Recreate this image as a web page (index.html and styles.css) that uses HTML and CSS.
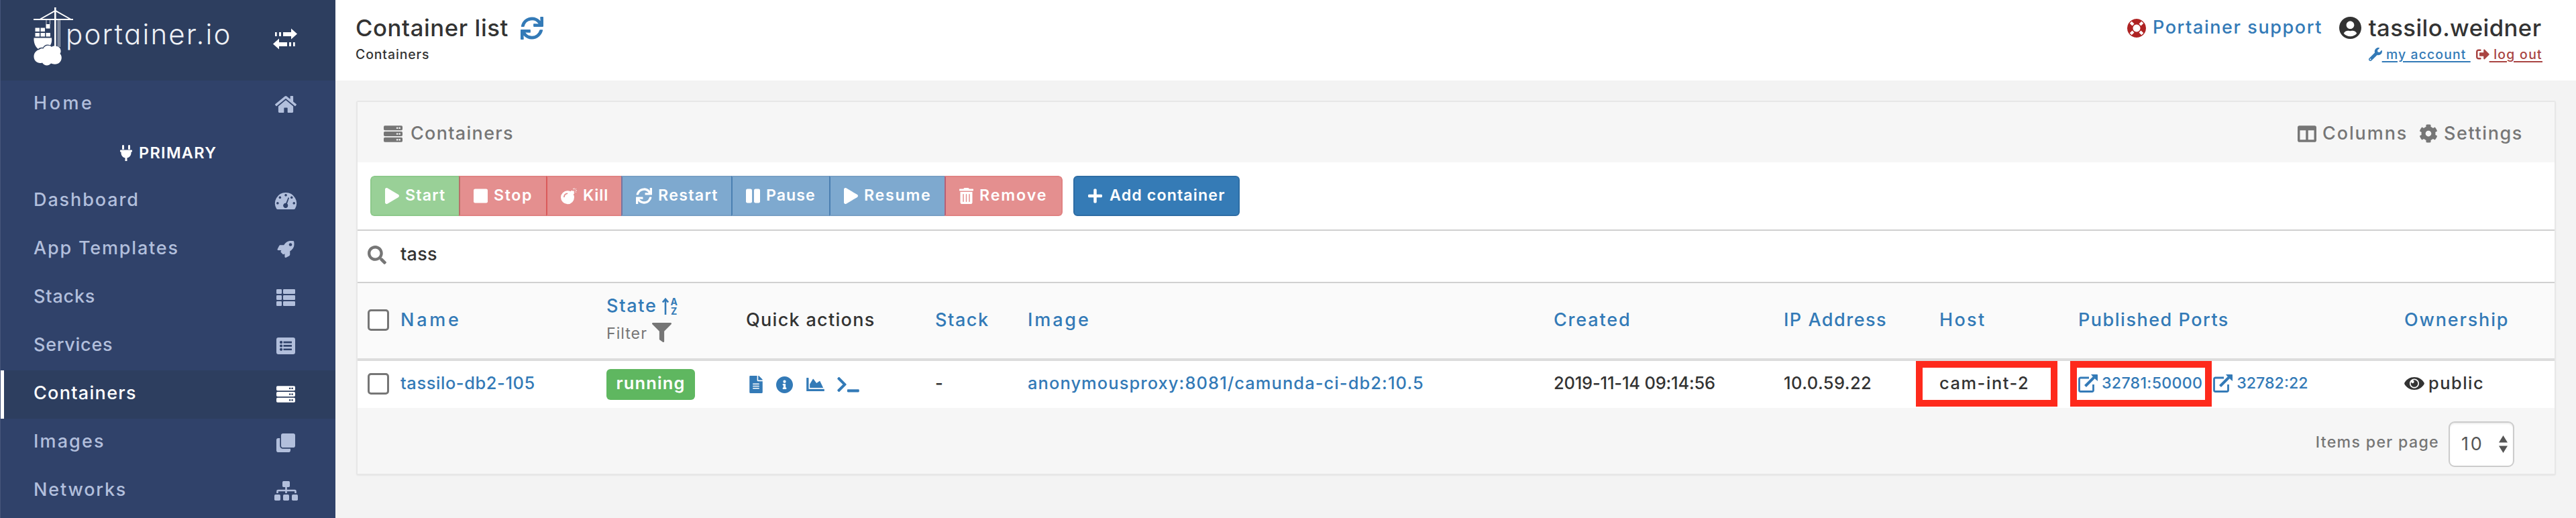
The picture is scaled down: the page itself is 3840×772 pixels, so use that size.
FILE: index.html
```html
<!DOCTYPE html>
<html lang="en">
<head>
<meta charset="utf-8">
<title>Portainer</title>
<link rel="stylesheet" href="styles.css">
</head>
<body>
<svg class="defs" width="0" height="0" aria-hidden="true">
  <symbol id="i-server" viewBox="0 32 512 448"><path fill-rule="evenodd" d="M32 32H480a32 32 0 0 1 32 32V128a32 32 0 0 1-32 32H32a32 32 0 0 1-32-32V64a32 32 0 0 1 32-32zM368 72a24 24 0 1 0 .1 0zM432 72a24 24 0 1 0 .1 0zM32 192H480a32 32 0 0 1 32 32V288a32 32 0 0 1-32 32H32a32 32 0 0 1-32-32V224a32 32 0 0 1 32-32zM368 232a24 24 0 1 0 .1 0zM432 232a24 24 0 1 0 .1 0zM32 352H480a32 32 0 0 1 32 32V448a32 32 0 0 1-32 32H32a32 32 0 0 1-32-32V384a32 32 0 0 1 32-32zM368 392a24 24 0 1 0 .1 0zM432 392a24 24 0 1 0 .1 0z"/></symbol>
  <symbol id="i-sync" viewBox="0 0 512 512"><path d="M440.65 12.57l4 82.77A247.16 247.16 0 0 0 255.83 8C134.73 8 33.91 94.92 12.29 209.82A12 12 0 0 0 24.09 224h49.05a12 12 0 0 0 11.67-9.26 175.91 175.91 0 0 1 317-56.94l-101.46-4.86a12 12 0 0 0-12.57 12v47.41a12 12 0 0 0 12 12H500a12 12 0 0 0 12-12V12a12 12 0 0 0-12-12h-47.37a12 12 0 0 0-11.98 12.57zM255.83 432a175.61 175.61 0 0 1-146-77.8l101.8 4.87a12 12 0 0 0 12.57-12v-47.4a12 12 0 0 0-12-12H12a12 12 0 0 0-12 12V500a12 12 0 0 0 12 12h47.35a12 12 0 0 0 12-12.6l-4.15-82.57A247.17 247.17 0 0 0 255.83 504c121.11 0 221.93-86.92 243.55-201.82a12 12 0 0 0-11.8-14.18h-49.05a12 12 0 0 0-11.67 9.26A175.86 175.86 0 0 1 255.83 432z"/></symbol>
  <symbol id="i-play" viewBox="0 0 448 512"><path d="M424.4 214.7L72.4 6.6C43.8-10.3 0 6.1 0 47.9V464c0 37.5 40.7 60.1 72.4 41.3l352-208c31.4-18.5 31.5-64.1 0-82.6z"/></symbol>
  <symbol id="i-external" viewBox="0 0 29 27"><path d="M16 5H3.5A2 2 0 0 0 1.500 7V23.500A2 2 0 0 0 3.500 25.500H20.500A2 2 0 0 0 22.500 23.500V15" fill="none" stroke="currentColor" stroke-width="2.800"/><path d="M10.500 17.500L23.500 4.500" fill="none" stroke="currentColor" stroke-width="4"/><path d="M19 0H28.200A.8.8 0 0 1 29 .8V10L26 7.500 21.500 3z"/></symbol>
</svg>
<div class="app">
  <nav class="sidebar">
    <div class="brand">
      <svg class="crane" viewBox="0 0 62 88">
        <g fill="none" stroke="currentColor"><path d="M1 19H60" stroke-width="2.200"/><path d="M11 18.500L33.500 6 56 18.500" stroke-width="2"/><path d="M33.300 1V60" stroke-width="2.600"/><path d="M37.600 20V60M40.200 20V60" stroke-width="1.200" opacity=".75"/><path d="M20 20V26M25.500 20V26" stroke-width="1" opacity=".7"/></g>
        <path d="M19.500 26h6v6.500h-6zM3.500 31.500h6.500V37H3.500zM11.500 31.500H18V37H11.500zM3.500 39H10v5.500H3.500zM11.500 39H18v5.500H11.500zM19.500 39H26v5.500H19.500zM1.500 46.500H28C28.500 51 28 54 26 57.500 21 55.500 17 57 15 61 12 60.500 9.500 61.500 8 63 4 60 1 54 1.500 46.500z"/>
        <path d="M9.500 64C11 62 14 62 15.500 62.500 17.500 57 25 56.500 28 60 31 57.500 38 58.500 40.500 62 42 65 42 68 40.500 70 44.500 74 43.500 83 36 85.300 32 86.300 28.500 85 27 84.500 23 89 17 88 14 83.500 8 85.500 2 81.500 1.500 75 1 69.500 5 65 9.500 64z"/>
      </svg>
      <span class="wordmark">portainer.io</span>
      <svg class="toggle" viewBox="0 0 36 32"><path d="M15 6h12V.500L36 8.500 27 16.500V12H15zM3 6h2.700v6H3zM9 6h3v6H9zM21 21H9v-5.500L0 23.500 9 31.500V27h12zM24 21h3v6h-3zM30 21h2.700v6H30z"/></svg>
    </div>
    <a class="item"><span class="k35">Home</span><span class="slot"><svg class="i32" viewBox="0 32 576 448"><path d="M488 312.700V456c0 13.300-10.700 24-24 24H348c-6.600 0-12-5.400-12-12V356c0-6.600-5.400-12-12-12h-72c-6.600 0-12 5.400-12 12v112c0 6.600-5.400 12-12 12H112c-13.300 0-24-10.700-24-24V312.700c0-3.600 1.600-7 4.400-9.300l188-154.800c4.400-3.600 10.800-3.600 15.300 0l188 154.800c2.700 2.300 4.300 5.700 4.300 9.300zm83.600-60.900L488 182.900V44.400c0-6.600-5.400-12-12-12h-56c-6.600 0-12 5.400-12 12V117l-89.500-73.700c-17.700-14.600-43.300-14.600-61 0L4.400 251.800c-5.100 4.200-5.800 11.800-1.600 16.900l25.500 31c4.200 5.100 11.800 5.800 16.900 1.600l235.200-193.700c4.400-3.600 10.800-3.600 15.300 0l235.200 193.700c5.100 4.200 12.700 3.500 16.900-1.600l25.500-31c4.200-5.200 3.400-12.700-1.700-16.900z"/></svg></span></a>
    <div class="endpoint"><svg class="plug" viewBox="0 0 384 512"><path d="M256 144V32c0-17.700 14.300-32 32-32s32 14.300 32 32v112h-64zm112 16H16c-8.800 0-16 7.200-16 16v32c0 8.800 7.200 16 16 16h16v32c0 77.400 55 142 128 156.800V512h64v-99.200c73-14.800 128-79.400 128-156.800v-32h16c8.800 0 16-7.200 16-16v-32c0-8.800-7.200-16-16-16zm-240-16V32c0-17.700-14.300-32-32-32S64 14.300 64 32v112h64z"/></svg><span class="k13">PRIMARY</span></div>
    <a class="item"><span class="k19">Dashboard</span><span class="slot"><svg class="i32" viewBox="0 0 32 25"><path fill-rule="evenodd" d="M16 0A16 16 0 0 1 29.900 24Q29.300 25 28 25H4Q2.700 25 2.100 24A16 16 0 0 1 16 0zM16 2a1.800 1.800 0 1 0 .1 0zM7.300 5.500a1.800 1.800 0 1 0 .1 0zM24.700 5.500a1.800 1.800 0 1 0 .1 0zM3.800 14a1.800 1.800 0 1 0 .1 0zM28.200 14a1.800 1.800 0 1 0 .1 0zM19.500 7.500L16.200 15.800A3.600 3.600 0 1 0 18 16.600L21 8.200Q20.500 7 19.500 7.500z"/></svg></span></a>
    <a class="item"><span class="k18">App Templates</span><span class="slot"><svg class="i28" viewBox="0 0 512 512"><path d="M505.100 19.100C503.800 13 499 8.200 492.900 6.900 460.700 0 435.500 0 410.400 0 307.200 0 245.300 55.200 199.100 128H94.900c-18.200 0-34.800 10.300-42.900 26.500L2.600 253.300c-8 16 3.600 34.700 21.500 34.700h95.100c-5.900 12.800-11.900 25.500-18 37.700-3.100 6.200-1.900 13.600 3 18.500l63.600 63.600c4.900 4.900 12.300 6.100 18.500 3 12.200-6.100 24.900-12 37.700-17.900V488c0 17.800 18.800 29.400 34.700 21.500l98.700-49.400c16.300-8.100 26.500-24.800 26.500-42.900V312.800c72.600-46.400 128-108.400 128-211.100.1-25.200.1-50.400-6.800-82.600zM400 160c-26.500 0-48-21.500-48-48s21.500-48 48-48 48 21.500 48 48-21.500 48-48 48z"/></svg></span></a>
    <a class="item"><span class="k08">Stacks</span><span class="slot"><svg class="i28" viewBox="0 0 28 25"><rect width="8" height="7" rx="1.200"/><rect x="10" width="18" height="7" rx="1.200"/><rect y="9" width="8" height="7" rx="1.200"/><rect x="10" y="9" width="18" height="7" rx="1.200"/><rect y="18" width="8" height="7" rx="1.200"/><rect x="10" y="18" width="18" height="7" rx="1.200"/></svg></span></a>
    <a class="item"><span class="k07">Services</span><span class="slot"><svg class="i28" viewBox="0 0 28 25"><path fill-rule="evenodd" d="M3 0H25a3 3 0 0 1 3 3V22a3 3 0 0 1-3 3H3a3 3 0 0 1-3-3V3a3 3 0 0 1 3-3zM7 5a2.100 2.100 0 1 0 .1 0zM7 10.400a2.100 2.100 0 1 0 .1 0zM7 15.700a2.100 2.100 0 1 0 .1 0zM10.500 5.700h12.500v2.700H10.500zM10.500 11.100h12.500v2.700H10.500zM10.500 16.400h12.500v2.700H10.500z"/></svg></span></a>
    <a class="item active"><span class="k13">Containers</span><span class="slot"><svg class="i28"><use href="#i-server"/></svg></span></a>
    <a class="item"><span class="k21">Images</span><span class="slot"><svg class="i28 tall" viewBox="0 0 512 512"><path d="M464 0c26.510 0 48 21.490 48 48v288c0 26.510-21.490 48-48 48H176c-26.510 0-48-21.490-48-48V48c0-26.510 21.490-48 48-48h288M176 416c-44.112 0-80-35.888-80-80V128H48c-26.510 0-48 21.490-48 48v288c0 26.510 21.490 48 48 48h288c26.510 0 48-21.490 48-48v-48H176z"/></svg></span></a>
    <a class="item"><span class="k18">Networks</span><span class="slot"><svg class="sitemap" viewBox="0 0 35 29"><rect x="12" width="11" height="9" rx="1.700"/><rect y="20" width="9" height="9" rx="1.700"/><rect x="13" y="20" width="9" height="9" rx="1.700"/><rect x="26" y="20" width="9" height="9" rx="1.700"/><path d="M17.500 9V18M4.500 18V15a1 1 0 0 1 1-1H30.500a1 1 0 0 1 1 1V18" fill="none" stroke="currentColor" stroke-width="2.600"/></svg></span></a>
  </nav>

  <main class="main">
    <header class="topbar">
      <div class="heading">
        <div class="title"><span class="k06">Container list</span><svg class="reload"><use href="#i-sync"/></svg></div>
        <div class="crumb k09">Containers</div>
      </div>
      <div class="user">
        <a class="support"><svg class="ring" viewBox="0 0 28 28"><path fill-rule="evenodd" d="M14 0A14 14 0 1 1 13.990 0zM14 8.500A5.500 5.500 0 1 0 14.010 8.500z"/><g stroke="#fff" stroke-width="4.200"><path d="M5.200 5.200L9 9M22.800 5.200L19 9M5.200 22.800L9 19M22.800 22.800L19 19"/></g></svg><span class="k16">Portainer support</span></a>
        <div class="account">
          <div class="who"><svg class="avatar" viewBox="0 8 496 496"><path d="M248 8C111 8 0 119 0 256s111 248 248 248 248-111 248-248S385 8 248 8zm0 96c48.600 0 88 39.400 88 88s-39.400 88-88 88-88-39.400-88-88 39.400-88 88-88zm0 344c-58.700 0-111.300-26.600-146.500-68.200 18.800-35.400 55.600-59.800 98.500-59.800 2.400 0 4.800.4 7.100 1.100 13 4.200 26.600 6.900 40.900 6.900 14.300 0 28-2.700 40.900-6.900 2.300-.7 4.700-1.100 7.100-1.100 42.900 0 79.700 24.400 98.500 59.800C359.300 421.400 306.700 448 248 448z"/></svg><span class="k04">tassilo.weidner</span></div>
          <div class="links">
            <a class="mine"><svg class="i20" viewBox="0 0 512 512"><path d="M507.730 109.100c-2.240-9.030-13.540-12.090-20.120-5.510l-74.360 74.360-67.880-11.310-11.310-67.880 74.360-74.360c6.620-6.620 3.430-17.900-5.660-20.160-47.380-11.740-99.550.91-136.580 37.930-39.640 39.640-50.550 97.100-34.050 147.200L18.740 402.760c-24.990 24.990-24.990 65.510 0 90.500 24.990 24.990 65.510 24.990 90.500 0l213.210-213.210c50.120 16.710 107.470 5.680 147.370-34.220 37.070-37.070 49.700-89.320 37.910-136.730zM64 472c-13.250 0-24-10.750-24-24 0-13.260 10.750-24 24-24s24 10.740 24 24c0 13.250-10.750 24-24 24z"/></svg><span class="under k11"> my account </span></a>
            <a class="out"><svg class="i20" viewBox="0 0 512 512"><path d="M497 273L329 441c-15 15-41 4.500-41-17v-96H152c-13.300 0-24-10.700-24-24v-96c0-13.300 10.700-24 24-24h136V88c0-21.400 25.900-32 41-17l168 168c9.300 9.400 9.300 24.600 0 34zM192 436v-40c0-6.600-5.400-12-12-12H96c-17.700 0-32-14.300-32-32V160c0-17.700 14.300-32 32-32h84c6.600 0 12-5.400 12-12V76c0-6.600-5.400-12-12-12H96c-53 0-96 43-96 96v192c0 53 43 96 96 96h84c6.600 0 12-5.400 12-12z"/></svg><span class="under k13"> log out</span></a>
          </div>
        </div>
      </div>
    </header>

    <section class="widget">
      <div class="widget-head">
        <svg class="i28"><use href="#i-server"/></svg><span class="label k13">Containers</span>
        <div class="tools">
          <span class="tool columns"><svg class="i28" viewBox="0 32 512 448"><path d="M464 32H48C21.490 32 0 53.490 0 80v352c0 26.510 21.490 48 48 48h416c26.510 0 48-21.490 48-48V80c0-26.510-21.490-48-48-48zM224 416H64V160h160v256zm224 0H288V160h160v256z"/></svg><span class="k19">Columns</span></span>
          <span class="tool"><svg class="i28 tall" viewBox="0 0 512 512"><path d="M487.400 315.700l-42.600-24.600c4.300-23.200 4.300-47 0-70.200l42.600-24.600c4.900-2.800 7.100-8.600 5.500-14-11.100-35.600-30-67.800-54.700-94.600-3.800-4.100-10-5.100-14.800-2.300L380.800 110c-17.900-15.400-38.500-27.300-60.800-35.100V25.800c0-5.600-3.900-10.500-9.400-11.700-36.700-8.200-74.300-7.800-109.200 0-5.500 1.200-9.400 6.100-9.400 11.700V75c-22.200 7.900-42.800 19.800-60.800 35.100L88.700 85.500c-4.900-2.800-11-1.900-14.800 2.300-24.700 26.700-43.600 58.900-54.700 94.600-1.700 5.400.6 11.200 5.500 14L67.300 221c-4.300 23.200-4.300 47 0 70.200l-42.600 24.600c-4.900 2.800-7.100 8.600-5.500 14 11.100 35.600 30 67.800 54.700 94.600 3.800 4.100 10 5.100 14.800 2.300l42.600-24.600c17.900 15.400 38.500 27.300 60.800 35.100v49.200c0 5.600 3.900 10.500 9.400 11.700 36.700 8.200 74.300 7.800 109.200 0 5.500-1.200 9.400-6.100 9.400-11.700v-49.200c22.200-7.900 42.800-19.800 60.800-35.100l42.600 24.600c4.900 2.800 11 1.900 14.800-2.300 24.700-26.700 43.600-58.900 54.700-94.600 1.500-5.500-.7-11.300-5.600-14.100zM256 336c-44.100 0-80-35.900-80-80s35.900-80 80-80 80 35.900 80 80-35.900 80-80 80z"/></svg><span class="k16">Settings</span></span>
        </div>
      </div>

      <div class="actions">
        <div class="group">
          <button class="btn green w-start"><svg class="i21"><use href="#i-play"/></svg><span class="k12">Start</span></button>
          <button class="btn red w-stop after-green"><svg class="i21" viewBox="0 32 448 448"><rect y="32" width="448" height="448" rx="48"/></svg><span class="k16">Stop</span></button>
          <button class="btn red w-kill"><svg class="i24" viewBox="0 0 24 24"><path fill-rule="evenodd" d="M10 4.200Q12.300 4.200 14.500 5.300L16 3.900Q16.500 3.500 17 3.900L18.200 5.100 19.300 4 20.300 5 19.200 6.100 20.200 7.200Q20.600 7.700 20.200 8.100L18.800 9.500Q20 12 20 14A10 10 0 1 1 10 4.200zM4 13Q3.800 14.200 5 14.200 5.800 14 5.800 13.300 6.300 9.800 9.600 9.300 10.400 9 10.300 8.200 10 7.400 9.200 7.500 4.800 8.300 4 13z"/><path d="M20 .3v2M23.800 4h-1.800M22.800 1.200l-1.200 1.200M22.800 6.800l-1.200-1.200M18.200 1.200l.8 1" fill="none" stroke="currentColor" stroke-width="1"/></svg><span class="k08">Kill</span></button>
          <button class="btn blue w-restart after-red"><svg class="i24"><use href="#i-sync"/></svg><span class="k13">Restart</span></button>
          <button class="btn blue w-pause"><svg class="i21" viewBox="0 32 448 448"><rect y="32" width="192" height="448" rx="48"/><rect x="256" y="32" width="192" height="448" rx="48"/></svg><span class="k10">Pause</span></button>
          <button class="btn blue w-resume"><svg class="i21"><use href="#i-play"/></svg><span class="k17">Resume</span></button>
          <button class="btn red w-remove after-blue"><svg class="i21" viewBox="0 0 448 512"><path d="M32 464a48 48 0 0 0 48 48h288a48 48 0 0 0 48-48V128H32zm272-256a16 16 0 0 1 32 0v224a16 16 0 0 1-32 0zm-96 0a16 16 0 0 1 32 0v224a16 16 0 0 1-32 0zm-96 0a16 16 0 0 1 32 0v224a16 16 0 0 1-32 0zM432 32H312l-9.400-18.700A24 24 0 0 0 281.100 0H166.800a23.720 23.720 0 0 0-21.400 13.300L136 32H16A16 16 0 0 0 0 48v32a16 16 0 0 0 16 16h416a16 16 0 0 0 16-16V48a16 16 0 0 0-16-16z"/></svg><span class="k19">Remove</span></button>
        </div>
        <button class="btn primary w-add"><svg class="i21" viewBox="0 32 448 448"><path d="M416 208H272V64c0-17.670-14.330-32-32-32h-32c-17.670 0-32 14.330-32 32v144H32c-17.670 0-32 14.330-32 32v32c0 17.670 14.330 32 32 32h144v144c0 17.670 14.330 32 32 32h32c17.670 0 32-14.330 32-32V304h144c17.670 0 32-14.330 32-32v-32c0-17.670-14.330-32-32-32z"/></svg><span class="k11">Add container</span></button>
      </div>

      <div class="search"><svg class="i28 tall" viewBox="0 0 512 512"><path d="M505 442.700L405.300 343c-4.500-4.500-10.600-7-17-7H372c27.600-35.300 44-79.700 44-128C416 93.100 322.900 0 208 0S0 93.100 0 208s93.100 208 208 208c48.300 0 92.700-16.400 128-44v16.300c0 6.400 2.500 12.500 7 17l99.700 99.700c9.400 9.400 24.600 9.400 33.900 0l28.300-28.300c9.400-9.400 9.400-24.600.1-34zM208 336c-70.700 0-128-57.200-128-128 0-70.700 57.200-128 128-128 70.700 0 128 57.200 128 128 0 70.700-57.200 128-128 128z"/></svg><span class="k03">tass</span></div>

      <div class="row head">
        <span class="check"></span>
        <a class="k37">Name</a>
        <div class="state"><a><span class="k17">State</span><svg class="sort" viewBox="0 0 23 26"><path d="M5 25V3M.800 6.500L5 1.800 9.200 6.500" fill="none" stroke="currentColor" stroke-width="2.600"/><text x="12.600" y="11.200">A</text><text x="13" y="25">Z</text></svg></a><span class="filter"><span class="k10">Filter</span><svg class="funnel" viewBox="0 0 512 512"><path d="M487.976 0H24.028C2.710 0-8.047 25.866 7.058 40.971L192 225.941V432c0 7.831 3.821 15.170 10.237 19.662l80 55.980C298.020 518.690 320 507.493 320 487.980V225.941l184.947-184.970C520.021 25.896 509.338 0 487.976 0z"/></svg></span></div>
        <span class="k13">Quick actions</span>
        <a class="k16">Stack</a>
        <a class="k29">Image</a>
        <a class="k18">Created</a>
        <a class="k15">IP Address</a>
        <a class="k23">Host</a>
        <a class="k15">Published Ports</a>
        <a class="k18">Ownership</a>
      </div>
      <div class="row body">
        <span class="check"></span>
        <a class="k06">tassilo-db2-105</a>
        <span><span class="badge k12">running</span></span>
        <div class="quick">
          <svg class="q-file" viewBox="0 0 384 512"><path d="M224 136V0H24C10.700 0 0 10.700 0 24v464c0 13.300 10.700 24 24 24h336c13.300 0 24-10.700 24-24V160H248c-13.200 0-24-10.800-24-24zm64 236c0 6.600-5.400 12-12 12H108c-6.600 0-12-5.400-12-12v-8c0-6.600 5.400-12 12-12h168c6.600 0 12 5.400 12 12v8zm0-64c0 6.600-5.400 12-12 12H108c-6.600 0-12-5.400-12-12v-8c0-6.600 5.400-12 12-12h168c6.600 0 12 5.400 12 12v8zm0-72v8c0 6.600-5.400 12-12 12H108c-6.600 0-12-5.400-12-12v-8c0-6.600 5.400-12 12-12h168c6.600 0 12 5.400 12 12zm96-114.100v6.100H256V0h6.100c6.400 0 12.500 2.500 17 7l97.900 98c4.500 4.500 7 10.600 7 16.900z"/></svg>
          <svg class="q-info" viewBox="8 8 496 496"><path d="M256 8C119.043 8 8 119.083 8 256c0 136.997 111.043 248 248 248s248-111.003 248-248C504 119.083 392.957 8 256 8zm0 110c23.196 0 42 18.804 42 42s-18.804 42-42 42-42-18.804-42-42 18.804-42 42-42zm56 254c0 6.627-5.373 12-12 12h-88c-6.627 0-12-5.373-12-12v-24c0-6.627 5.373-12 12-12h12v-64h-12c-6.627 0-12-5.373-12-12v-24c0-6.627 5.373-12 12-12h64c6.627 0 12 5.373 12 12v100h12c6.627 0 12 5.373 12 12v24z"/></svg>
          <svg class="q-chart" viewBox="0 64 512 384"><path d="M500 384c6.600 0 12 5.400 12 12v40c0 6.600-5.400 12-12 12H12c-6.600 0-12-5.400-12-12V76c0-6.600 5.400-12 12-12h40c6.600 0 12 5.400 12 12v308h436zM372.700 159.500L288 216l-85.300-113.700c-5.100-6.800-15.500-6.300-19.900 1L96 248v104h384l-89.900-187.800c-3.200-6.500-11.400-8.700-17.400-4.700z"/></svg>
          <svg class="q-term" viewBox="0 0 640 512"><path d="M257.981 272.971L63.638 467.314c-9.373 9.373-24.569 9.373-33.941 0L7.029 444.647c-9.357-9.357-9.375-24.522-.04-33.901L161.011 256 6.990 101.255c-9.335-9.379-9.317-24.544.04-33.901l22.667-22.667c9.373-9.373 24.569-9.373 33.941 0L257.981 239.030c9.373 9.372 9.373 24.568 0 33.941zM640 456v-32c0-13.255-10.745-24-24-24H312c-13.255 0-24 10.745-24 24v32c0 13.255 10.745 24 24 24h304c13.255 0 24-10.745 24-24z"/></svg>
        </div>
        <span>-</span>
        <a class="k11">anonymousproxy:8081/camunda-ci-db2:10.5</a>
        <span class="k-01">2019-11-14 09:14:56</span>
        <span class="k05">10.0.59.22</span>
        <span class="marked host"><span class="k16">cam-int-2</span></span>
        <div class="marked ports"><a><svg class="ext"><use href="#i-external"/></svg><span class="k03">32781:50000</span></a><a><svg class="ext"><use href="#i-external"/></svg><span>32782:22</span></a></div>
        <span class="owner"><svg class="eye" viewBox="0 72 576 368"><path d="M569.354 231.631C512.969 135.948 407.808 72 288 72 168.140 72 63.004 135.994 6.646 231.631a47.999 47.999 0 0 0 0 48.739C63.031 376.051 168.192 440 288 440c119.860 0 224.996-63.994 281.354-159.631a47.997 47.997 0 0 0 0-48.738zM288 392c-75.162 0-136-60.827-136-136 0-75.162 60.826-136 136-136 75.162 0 136 60.826 136 136 0 75.162-60.826 136-136 136zm104-136c0 57.438-46.562 104-104 104s-104-46.562-104-104c0-17.708 4.431-34.379 12.236-48.973l-.001.032c0 23.651 19.173 42.823 42.824 42.823s42.824-19.173 42.824-42.823c0-23.651-19.173-42.824-42.824-42.824l-.032.001C253.621 156.431 270.292 152 288 152c57.438 0 104 46.562 104 104z"/></svg><span class="k15">public</span></span>
      </div>

      <div class="foot">
        <span class="per k13">Items per page</span>
        <div class="select"><span class="k28">10</span><svg class="arrows" viewBox="0 0 13 26"><path d="M6.500 0L13 10.500H0zM6.500 26L13 15.500H0z"/></svg></div>
      </div>
    </section>
  </main>
</div>
</body>
</html>
```

FILE: styles.css
```css
*, *::after { box-sizing: border-box; }
body {
  margin: 0;
  background: #f3f3f3;
  color: #333;
  font: 500 27px/1.2 Inter, "Liberation Sans", sans-serif;
  overflow: hidden;
}
svg { display: block; fill: currentColor; flex: none; overflow: visible; }
.defs { position: absolute; }
span, a { white-space: nowrap; }
.app { display: flex; width: 3840px; height: 772px; }

/* tracking steps */
.k-01 { letter-spacing: -.15px; }
.k03 { letter-spacing: .28px; }
.k04 { letter-spacing: .43px; }
.k05 { letter-spacing: .48px; }
.k06 { letter-spacing: .6px; }
.k07 { letter-spacing: .72px; }
.k08 { letter-spacing: .82px; }
.k09 { letter-spacing: .92px; }
.k10 { letter-spacing: 1px; }
.k11 { letter-spacing: 1.12px; }
.k12 { letter-spacing: 1.18px; }
.k13 { letter-spacing: 1.3px; }
.k15 { letter-spacing: 1.51px; }
.k16 { letter-spacing: 1.58px; }
.k17 { letter-spacing: 1.74px; }
.k18 { letter-spacing: 1.82px; }
.k19 { letter-spacing: 1.9px; }
.k21 { letter-spacing: 2.15px; }
.k23 { letter-spacing: 2.35px; }
.k28 { letter-spacing: 2.79px; }
.k29 { letter-spacing: 2.9px; }
.k35 { letter-spacing: 3.54px; }
.k37 { letter-spacing: 3.76px; }

/* icon sizes */
.i20 { width: 20px; height: 20px; }
.i21 { width: 21px; height: 24px; }
.i24 { width: 24px; height: 24px; }
.i28 { width: 28px; height: 25px; }
.i28.tall { height: 28px; }
.i32 { width: 32px; height: 25px; }

/* sidebar */
.sidebar { width: 500px; flex: none; background: #30426a; border-left: 1px solid #46557b; color: #b2bfdc; overflow: hidden; }
.brand { display: flex; height: 120px; background: #2d3e5f; color: #fff; }
.crane { width: 62px; height: 88px; margin: 10px 0 0 48px; }
.wordmark { margin: 26px 0 0 -13px; width: 309px; font-size: 42px; line-height: 50px; font-weight: 300; letter-spacing: 2.2px; font-feature-settings: "cv11"; color: #eef1f6; }
.toggle { width: 36px; height: 32px; margin-top: 42px; }
.item { display: flex; align-items: center; justify-content: space-between; height: 72px; padding: 0 56px 3px 49px; }
.slot { display: flex; justify-content: center; width: 36px; padding-top: 2px; }
.sitemap { width: 35px; height: 29px; }
.active { margin-left: -1px; padding-left: 44px; border-left: 6px solid #fff; background: #2d3e5f; color: #fff; }
.endpoint { display: flex; align-items: center; height: 72px; padding-left: 178px; gap: 10px; color: #fff; font-size: 23.5px; font-weight: 600; }
.plug { width: 18px; height: 24px; }

/* top bar */
.main { flex: 1; min-width: 0; }
.topbar { display: flex; justify-content: space-between; height: 120px; padding: 21px 50px 0 30px; background: #fff; }
.title { display: flex; align-items: center; height: 41px; gap: 18px; font-size: 34.7px; }
.reload { width: 34px; height: 34px; color: #337ab7; }
.crumb { margin-top: 5px; font-size: 19.4px; line-height: 28px; }
.user { display: flex; width: 619px; }
.support { display: flex; align-items: center; width: 318px; height: 41px; gap: 10px; color: #337ab7; }
.ring { width: 28px; height: 28px; color: #ae2323; }
.who { display: flex; align-items: center; height: 41px; gap: 11px; font-size: 34.7px; }
.avatar { width: 33px; height: 33px; }
.links { display: flex; margin: 5px 0 0 44px; height: 28px; font-size: 19.4px; line-height: 28px; }
.links a { display: flex; align-items: center; }
.mine { width: 160px; color: #337ab7; }
.out { color: #a94442; }
.under { white-space: pre; text-decoration: underline; text-decoration-thickness: 2px; text-underline-offset: 3px; }

/* widget */
.widget { margin: 30px 30px 0 31px; border: 2px solid #e7e7e7; border-radius: 3px; background: #fff; box-shadow: 0 1px 2px rgba(0, 0, 0, .06); }
.widget-head { display: flex; align-items: center; height: 90px; padding: 5px 52px 0 39px; background: #f6f6f6; color: #767676; }
.label { margin-left: 12px; }
.tools { display: flex; margin-left: auto; }
.tool { display: flex; align-items: center; gap: 9px; width: 150px; }
.tool.columns { width: 181px; }

.actions { display: flex; height: 102px; padding: 20px 0 0 19px; gap: 16px; border-bottom: 2px solid #d0d0d0; }
.group { display: flex; border-radius: 6px; overflow: hidden; }
.btn { display: flex; align-items: center; height: 60px; padding: 0 0 1px 20px; gap: 9px; border: 2px solid; border-right: 0; color: #fff; font: 600 23.2px/1.2 Inter, sans-serif; }
.green { background: #99d097; border-color: #8dc98b; }
.red { background: #e48f8f; border-color: #e08282 #e08282 #e08282 #da5a5a; }
.blue { background: #7ea9cf; border-color: #779fc5 #779fc5 #779fc5 #4a7fb1; }
.red.after-green { border-left-color: #b8706a; }
.blue.after-red { border-left-color: #76759f; }
.red.after-blue { border-left-color: #b65f76; }
.w-start { width: 132px; border-radius: 6px 0 0 6px; }
.w-stop { width: 130px; }
.w-kill { width: 112px; }
.w-restart { width: 164px; }
.w-pause { width: 146px; }
.w-resume { width: 172px; }
.w-remove { width: 176px; border-right: 2px solid #e08282; border-radius: 0 6px 6px 0; }
.w-add { width: 248px; gap: 11px; border: 2px solid #2e6da4; border-radius: 6px; background: #357bb6; }

.search { display: flex; align-items: center; height: 78px; padding: 0 0 5px 15px; gap: 21px; border-bottom: 2px solid #d0d0d0; }
.search svg, .row .check { color: #767676; }

/* container table */
.row { display: grid; grid-template-columns: 49px 307px 208px 282px 138px 784px 343px 232px 207px 486px 1fr; align-items: center; padding-left: 15px; }
.row a { color: #337ab7; }
.head { height: 116px; padding-bottom: 2px; background: #fafafa; border-bottom: 4px solid #dcdcdc; }
.body { height: 70px; padding-bottom: 3px; font-size: 25.4px; }
.check { width: 32px; height: 32px; border: 3px solid #767676; border-radius: 5px; background: #fff; }
.state a, .filter { display: flex; align-items: center; height: 41px; gap: 7px; }
.sort { width: 23px; height: 26px; }
.sort text { font: 700 14px Inter, sans-serif; }
.filter { color: #767676; font-size: 23.2px; font-weight: 400; }
.funnel { width: 29px; height: 29px; margin-top: -4px; }
.badge { display: inline-block; width: 132px; height: 46px; margin-top: 3px; border-radius: 6px; background: #5fb760; color: #fff; font-weight: 600; line-height: 41px; text-align: center; }
.quick { display: flex; align-items: center; padding: 3px 0 0 5px; color: #337ab7; }
.q-file { width: 20px; height: 26px; }
.q-info { width: 25px; height: 25px; margin-left: 20px; }
.q-chart { width: 27px; height: 20px; margin-left: 20px; }
.q-term { width: 33px; height: 26px; margin-left: 19px; }

/* highlight frames drawn over the row */
.marked { position: relative; }
.marked::after { content: ""; position: absolute; width: 211px; height: 68px; border: 10px solid #fe2a1c; }
.host::after { left: -35px; top: -18px; }
.ports::after { left: -12px; top: -20px; }
.ports { display: flex; gap: 16px; font-size: 23.2px; }
.ports a { display: flex; align-items: center; gap: 6px; }
.ext { width: 29px; height: 27px; }
.owner { display: flex; align-items: center; gap: 6px; }
.eye { width: 30px; height: 19px; }

/* pagination */
.foot { display: flex; justify-content: flex-end; height: 98px; padding: 20px 60px 0 0; gap: 14px; background: #f6f6f6; }
.per { color: #767676; font-size: 23.2px; line-height: 63px; }
.select { display: flex; align-items: center; justify-content: space-between; width: 98px; height: 68px; padding: 0 8px 0 17px; border: 2px solid #ccc; border-radius: 9px; background: #fff; color: #555; font-weight: 400; box-shadow: inset 0 2px 2px rgba(0, 0, 0, .07); }
.arrows { width: 13px; height: 26px; }
```
